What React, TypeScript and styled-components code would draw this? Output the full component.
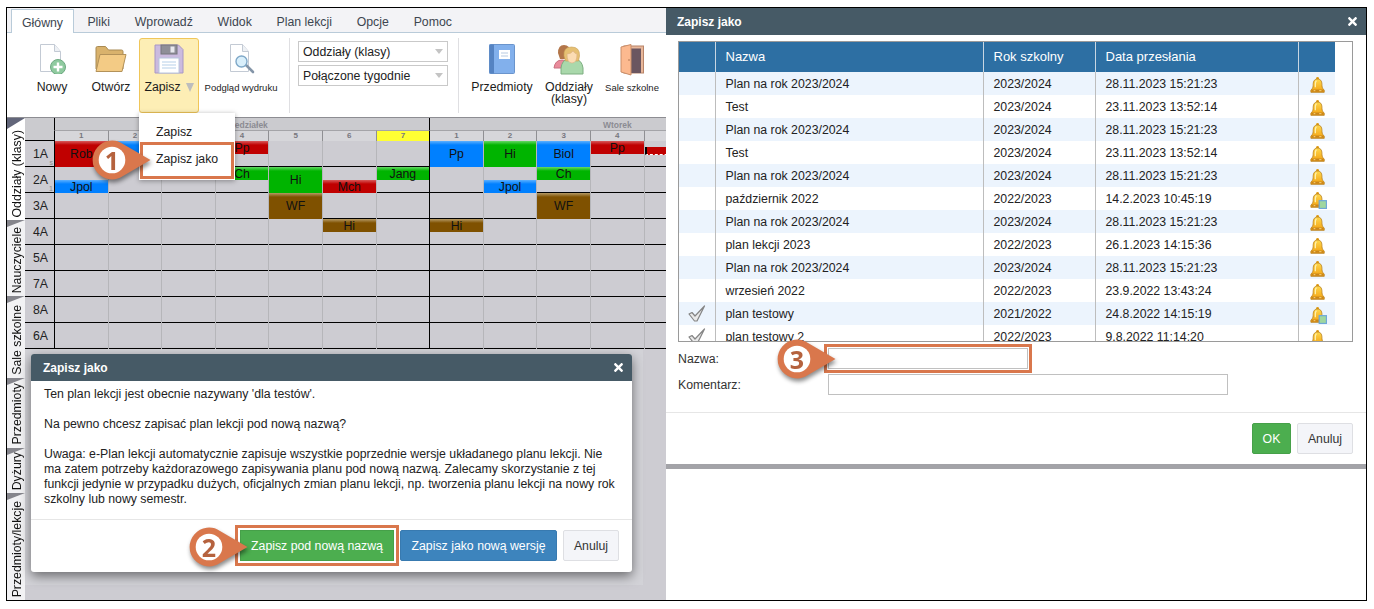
import React from "react";
import styled, { createGlobalStyle } from "styled-components";
import { FaTimes } from "react-icons/fa";

const GlobalStyle = createGlobalStyle`
  html, body { margin: 0; padding: 0; background: #fff; }
  body { font-family: "Liberation Sans", Arial, sans-serif; font-size: 12.3px; color: #222; }
  * { box-sizing: border-box; }
`;

const ORANGE = "#d9774c";

const Page = styled.div`
  position: relative;
  width: 1374px;
  height: 609px;
  padding: 7px 7px 8px 6px;
  overflow: hidden;
`;

const Frame = styled.div`
  display: flex;
  height: 100%;
  border: 1px solid #000;
`;

const LeftPane = styled.div`
  position: relative;
  width: 659px;
  display: flex;
  flex-direction: column;
  overflow: hidden;
  background: #cdccd2;
`;

const TabBar = styled.div`
  display: flex;
  height: 25px;
  padding: 1px 0 0 4px;
  background: #f3f3f6;
  border-bottom: 1px solid #b9cbd9;
`;

const Tab = styled.div<{ $active?: boolean }>`
  padding: 0 ${(p) => (p.$active ? "10px" : "12.4px")};
  height: 24px;
  line-height: 26px;
  color: #3d4650;
  ${(p) =>
    p.$active &&
    `background: #fff; border: 1px solid #b9cbd9; border-bottom: 0; margin-right: 1px;`}
`;

const Ribbon = styled.div`
  display: flex;
  height: 85px;
  padding: 5px 0 4px 16px;
  background: #fff;
  border-bottom: 1px solid #8d8d92;
`;

const RibbonButton = styled.div<{ $w: number; $on?: boolean; $left?: number }>`
  width: ${(p) => p.$w}px;
  flex: none;
  display: flex;
  flex-direction: column;
  align-items: center;
  margin-left: ${(p) => p.$left ?? 0}px;
  padding-top: 6px;
  border-radius: 3px;
  color: #1c1c1c;
  ${(p) => p.$on && `background: #fdeeb5; border: 1px solid #f0c659; padding-top: 5px;`}
  svg { flex: none; margin-bottom: 7px; }
`;

const RibbonLabel = styled.div<{ $small?: boolean; $lift?: number }>`
  display: flex;
  align-items: center;
  gap: 5px;
  text-align: center;
  line-height: 12px;
  white-space: nowrap;
  margin-top: ${(p) => p.$lift ?? 0}px;
  ${(p) => p.$small && `font-size: 9.5px;`}
`;

const LabelCaret = styled.span`
  width: 0;
  height: 0;
  border-left: 4.5px solid transparent;
  border-right: 4.5px solid transparent;
  border-top: 9px solid #bdbdbd;
`;

const RibbonDivider = styled.div<{ $left: number }>`
  width: 1px;
  flex: none;
  margin-left: ${(p) => p.$left}px;
  background: #dfdfe2;
`;

const SelectStack = styled.div`
  width: 150px;
  flex: none;
  display: flex;
  flex-direction: column;
  gap: 3px;
  margin: 3px 10px 0 8px;
`;

const FakeSelect = styled.div`
  display: flex;
  align-items: center;
  justify-content: space-between;
  height: 21px;
  padding: 0 4px;
  border: 1px solid #c9c9c9;
  color: #222;
  &::after {
    content: "";
    border-left: 4px solid transparent;
    border-right: 4px solid transparent;
    border-top: 5px solid #c4c4c4;
  }
`;

const Menu = styled.div`
  position: absolute;
  left: 132px;
  top: 105px;
  width: 96px;
  padding: 1px;
  background: #fff;
  box-shadow: 0 1px 5px rgba(0, 0, 0, 0.35);
  z-index: 3;
`;

const MenuItem = styled.div<{ $marked?: boolean }>`
  line-height: 16px;
  color: #222;
  padding: ${(p) => (p.$marked ? "6px 0 9px 13px" : "10px 0 2px 16px")};
  ${(p) => p.$marked && `border: 3px solid ${ORANGE};`}
`;

const WorkArea = styled.div`
  flex: 1;
  display: flex;
  min-height: 0;
`;

const SideTabs = styled.div`
  width: 18px;
  flex: none;
  display: flex;
  flex-direction: column;
  background: #f4f4f6;
`;

const SideTab = styled.div<{ $h: number; $active?: boolean }>`
  position: relative;
  height: ${(p) => p.$h}px;
  display: flex;
  justify-content: center;
  align-items: flex-end;
  padding: 0 0 3px 1px;
  background: ${(p) => (p.$active ? "#fff" : "#f2f2f4")};
  &::before {
    content: "";
    position: absolute;
    left: 0;
    top: 0;
    width: 100%;
    height: ${(p) => (p.$active ? 11 : 7)}px;
    background: ${(p) => (p.$active ? "#62667a" : "#85858c")};
    clip-path: polygon(0 0, 100% 0, 0 100%);
  }
`;

const SideTabText = styled.span`
  writing-mode: vertical-rl;
  transform: rotate(180deg);
  color: #111;
  line-height: 16px;
  white-space: nowrap;
`;

const Schedule = styled.div`
  position: relative;
  flex: 1;
  min-width: 0;
`;

const DayRow = styled.div`
  display: flex;
  height: 12px;
  padding-left: 29px;
  background: #cbcbcf;
`;

const DayName = styled.div`
  width: 375.2px;
  flex: none;
  text-align: center;
  font-size: 8.5px;
  font-weight: bold;
  line-height: 15px;
  color: #8b8b93;
  border-left: 1px solid #000;
`;

const PeriodRow = styled.div`
  display: grid;
  grid-template-columns: 29px repeat(12, 53.6px);
  height: 11px;
  background: #cbcbcf;
  border-bottom: 1px solid #000;
`;

const Period = styled.div<{ $dayStart?: boolean; $hot?: boolean }>`
  text-align: center;
  font-size: 8px;
  font-weight: bold;
  line-height: 10px;
  color: #77777e;
  background: ${(p) => (p.$hot ? "#ffff33" : "#d6d6da")};
  border-top: 1px solid #a4a4a8;
  border-left: 1px solid ${(p) => (p.$dayStart ? "#000" : "#8f8f93")};
`;

const ClassRow = styled.div`
  display: grid;
  grid-template-columns: 29px repeat(12, 53.6px);
  height: 26px;
  border-bottom: 1px solid #000;
`;

const ClassName = styled.div`
  position: relative;
  padding-left: 8px;
  line-height: 26px;
  color: #222;
`;

const ClassHint = styled.span`
  position: absolute;
  right: 1px;
  bottom: 0;
  font-size: 7px;
  line-height: 8px;
  color: #8a8a8a;
`;

const Cell = styled.div<{ $dayStart?: boolean }>`
  display: flex;
  flex-direction: column;
  min-width: 0;
  border-left: 1px solid ${(p) => (p.$dayStart ? "#000" : "#b6b6ba")};
`;

const lessonColors = {
  blue: ["#0080ff", "#5cb0ff"],
  green: ["#00b400", "#66d866"],
  red: ["#c00000", "#d85a5a"],
  brown: ["#7f5100", "#b59a66"],
};

type LessonColor = keyof typeof lessonColors;

const Lesson = styled.div<{ $color: LessonColor; $half?: boolean; $low?: boolean }>`
  height: ${(p) => (p.$half ? "13px" : "100%")};
  margin-top: ${(p) => (p.$low ? "auto" : "0")};
  display: flex;
  align-items: center;
  justify-content: center;
  color: #111;
  background: linear-gradient(
    to bottom,
    ${(p) => lessonColors[p.$color][1]} 0,
    ${(p) => lessonColors[p.$color][0]} 4px
  );
`;

const TinyLesson = styled.div`
  height: 8px;
  margin-top: 6px;
  background: #c00000;
  border-left: 2px solid #000;
  border-bottom: 1px dashed #fff;
`;

const DimBackdrop = styled.div`
  position: absolute;
  left: 18px;
  top: 341px;
  width: 618px;
  height: 236px;
  background: #d3d3d8;
`;

const Dialog = styled.div`
  position: absolute;
  left: 24px;
  top: 346px;
  width: 601px;
  background: #fff;
  border-radius: 3px;
  box-shadow: 0 4px 12px rgba(0, 0, 0, 0.5);
  z-index: 2;
`;

const DialogHead = styled.div<{ $square?: boolean }>`
  display: flex;
  align-items: center;
  justify-content: space-between;
  height: 27px;
  padding: ${(p) => (p.$square ? "0 7px 0 11px" : "0 7px 0 12px")};
  color: #fff;
  font-weight: bold;
  font-size: 12px;
  background: #465a66;
  border-radius: ${(p) => (p.$square ? "0" : "3px 3px 0 0")};
`;

const DialogBody = styled.div`
  padding: 6px 13px 12px;
  line-height: 15px;
  color: #222;
  p { margin: 0 0 15px; }
  p:last-child { margin: 0; }
`;

const DialogFoot = styled.div`
  display: flex;
  justify-content: flex-end;
  gap: 6px;
  padding: 10px 13px 11px;
  border-top: 1px solid #e6e6e6;
`;

const buttonTones = {
  green: "background: #4cae4f; border-color: #46a049; color: #fff;",
  blue: "background: #3d84bd; border-color: #387ab0; color: #fff;",
  plain: "background: #f4f5f9; border-color: #dedfe3; color: #333;",
};

const Button = styled.button<{ $tone: keyof typeof buttonTones; $marked?: boolean; $w: number }>`
  width: ${(p) => p.$w}px;
  height: 31px;
  padding: 0;
  font: inherit;
  border: 1px solid;
  border-radius: ${(p) => (p.$marked ? "0" : "2px")};
  ${(p) => buttonTones[p.$tone]}
  ${(p) => p.$marked && `outline: 3px solid ${ORANGE}; outline-offset: 2px;`}
`;

const RightPane = styled.div`
  flex: 1;
  min-width: 0;
  background: #fff;
`;

const SaveWindow = styled.div`
  background: #fff;
  box-shadow: 0 5px 0 #a3a3a8;
`;

const ListBox = styled.div`
  height: 301px;
  margin: 6px 13px 0 12px;
  border: 1px solid #9a9a9a;
  overflow: hidden;
`;

const Table = styled.table`
  width: 656px;
  table-layout: fixed;
  border-collapse: collapse;
  color: #222;
`;

const HeadCell = styled.th`
  height: 30px;
  padding: 0 0 2px 10px;
  font-weight: normal;
  font-size: 13px;
  text-align: left;
  color: #fff;
  background: #2d6fa3;
  border-left: 1px solid #c8d6e2;
  &:first-child { border-left: 0; }
`;

const BodyRow = styled.tr`
  height: 23px;
  background: #fff;
  &:nth-child(odd) { background: #ecf4fd; }
`;

const BodyCell = styled.td<{ $icon?: boolean }>`
  padding: ${(p) => (p.$icon ? "0" : "0 0 0 10px")};
  text-align: ${(p) => (p.$icon ? "center" : "left")};
  border-left: 1px solid #bdbdbd;
  line-height: 14px;
  white-space: nowrap;
  &:first-child { border-left: 0; }
  svg { display: block; margin: 0 auto; }
`;

const Form = styled.div`
  display: grid;
  grid-template-columns: 150px 400px;
  row-gap: 5px;
  align-items: center;
  margin: 6px 0 17px 12px;
`;

const FieldLabel = styled.label`
  color: #333;
`;

const TextField = styled.input<{ $short?: boolean; $marked?: boolean }>`
  display: block;
  width: ${(p) => (p.$short ? "200px" : "400px")};
  height: 21px;
  border: 1px solid #c0c0c0;
  border-radius: 0;
  background: #fff;
  ${(p) => p.$marked && `outline: 3px solid ${ORANGE}; outline-offset: 1px;`}
`;

const WindowFoot = styled(DialogFoot)`
  padding: 10px 13px 10px;
`;

const CalloutWrap = styled.div<{ $x: number; $y: number }>`
  position: absolute;
  left: ${(p) => p.$x}px;
  top: ${(p) => p.$y}px;
  width: 62px;
  height: 40px;
  z-index: 5;
  filter: drop-shadow(1px 3px 2px rgba(0, 0, 0, 0.45));
`;

const CalloutDigit = styled.span`
  position: absolute;
  left: 0;
  top: 0;
  width: 40px;
  height: 40px;
  text-align: center;
  font-family: "Open Sans", "Liberation Sans", sans-serif;
  font-weight: bold;
  font-size: 25px;
  line-height: 40px;
  color: #b5623e;
`;

const HiddenDefs = styled.svg`
  position: absolute;
  width: 0;
  height: 0;
`;

function Callout({ x, y, n }: { x: number; y: number; n: number }) {
  return (
    <CalloutWrap $x={x} $y={y}>
      <svg width="62" height="40" viewBox="0 0 62 40">
        <path d="M31 4 L58.500 20 L31 36 A19.400 19.400 0 1 1 31 4 Z" fill={ORANGE} />
        <circle cx="20" cy="20" r="13.300" fill="#fff" />
      </svg>
      <CalloutDigit>{n}</CalloutDigit>
    </CalloutWrap>
  );
}

function NewIcon() {
  return (
    <svg width="30" height="30" viewBox="0 0 30 30">
      <path d="M3.500.5h14l6 7v20h-20z" fill="#fff" stroke="#c3cad4" />
      <path d="M17.500.5v7h6" fill="#eef1f5" stroke="#c3cad4" />
      <circle cx="21" cy="23" r="7.500" fill="#8fca9f" stroke="#6da981" />
      <path d="M21 18.500v9M16.500 23h9" stroke="#fff" strokeWidth="2.400" />
    </svg>
  );
}

function FolderIcon() {
  return (
    <svg width="32" height="30" viewBox="0 0 32 30">
      <path d="M1 25V4q0-1.500 1.500-1.500h8l3 3.500h13q1.500 0 1.500 1.500V25z" fill="#d9b26c" stroke="#a98a52" />
      <path d="M5 10.500h26L27 27.500H1z" fill="#f3cb85" stroke="#b3925a" />
    </svg>
  );
}

function SaveIcon() {
  return (
    <svg width="30" height="30" viewBox="0 0 30 30">
      <path d="M1 1h23.500L29 5.500V29H1z" fill="#cbbbdf" stroke="#a897c4" />
      <rect x="7" y="1" width="16" height="9" fill="#8f8f98" stroke="#76767e" />
      <rect x="16.500" y="2.500" width="4" height="6" fill="#e8e8ee" />
      <rect x="5" y="14" width="20" height="15" fill="#fff" stroke="#b8c6de" />
      <path d="M8 18h14M8 21h14M8 24h14" stroke="#b5cfe8" />
    </svg>
  );
}

function PreviewIcon() {
  return (
    <svg width="30" height="30" viewBox="0 0 30 30">
      <path d="M4.500.5h12l6 7v20h-18z" fill="#fff" stroke="#c3cad4" />
      <path d="M16.500.5v7h6" fill="#eef1f5" stroke="#c3cad4" />
      <path d="M20 21l7 7" stroke="#8495a8" strokeWidth="2.600" strokeLinecap="round" />
      <circle cx="15.500" cy="17.500" r="5.500" fill="#d9effb" stroke="#7fa8c8" strokeWidth="1.400" />
    </svg>
  );
}

function BookIcon() {
  return (
    <svg width="26" height="30" viewBox="0 0 26 30">
      <rect x="0.500" y="0.500" width="25" height="29" rx="1" fill="#82b0ec" stroke="#6a94cc" />
      <rect x="0.500" y="0.500" width="4.500" height="29" fill="#5583c2" />
      <rect x="10" y="6" width="11" height="9" fill="#fff" />
      <path d="M12 9h7M12 12h7" stroke="#b8cbe2" />
    </svg>
  );
}

function PeopleIcon() {
  return (
    <svg width="32" height="32" viewBox="0 0 32 32">
      <path d="M1 24q1-8 8-8t8 8z" fill="#e98b9b" stroke="#c97080" />
      <path d="M5 9q0-8 6-8t6 7l-2 7H7z" fill="#b3764a" />
      <path d="M8 24q1-8 7-9h7q7 1 8 9v6H8z" fill="#a9d8ab" stroke="#7cae80" />
      <path d="M11 12q-1-9 7.500-9t8 9l-1 5h-13z" fill="#e6c073" stroke="#c7a055" strokeWidth=".6" />
      <path d="M14 10q4 0 6-3 2 3 4 3 0 9-5 9t-5-9z" fill="#fbdcb3" stroke="#dbb083" strokeWidth=".6" />
    </svg>
  );
}

function DoorIcon() {
  return (
    <svg width="24" height="32" viewBox="0 0 24 32">
      <rect x="4" y="2" width="19.500" height="27" fill="#e8b79a" stroke="#b88468" />
      <rect x="10" y="4.500" width="11" height="24.500" fill="#6b5660" />
      <path d="M1 3l10-2.500V31L1 28z" fill="#fcb98f" stroke="#c98d68" />
      <circle cx="9" cy="16" r=".8" fill="#a9704e" />
    </svg>
  );
}

function BellIcon({ badge }: { badge?: boolean }) {
  return (
    <svg width="20" height="20" viewBox="0 -3 18 18">
      <circle cx="9.500" cy="1" r="1.300" fill="#e09a12" />
      <path
        d="M9.500 1.500C6 1.500 5.500 4.500 5.500 7.500c0 2-1 3-2 4v2h12v-2c-1-1-2-2-2-4 0-3-.5-6-4-6z"
        fill="url(#bell-fill)"
        stroke="#b47c18"
        strokeWidth=".7"
      />
      <path d="M7.500 9V6q0-2 1-3" stroke="#fff2b0" strokeWidth="1.100" fill="none" />
      <rect x="4" y="11" width="11" height="2" fill="#c9861a" />
      <path d="M6 12h1.500M11 12h2" stroke="#ffe08a" strokeWidth=".8" />
      {badge && <rect x="11" y="7.500" width="6.500" height="7" fill="#9fd79f" stroke="#6fa8d8" strokeWidth="1.100" />}
    </svg>
  );
}

function CheckIcon() {
  return (
    <svg width="20" height="17" viewBox="0 0 20 17">
      <path d="M2 9l3-1.500L8 11 17.500 1 10 16H7.500z" fill="#e9e9e9" stroke="#858585" strokeWidth="1.200" strokeLinejoin="round" />
    </svg>
  );
}

type LessonInfo = { at: number; name?: string; color?: LessonColor; half?: boolean; low?: boolean; tiny?: boolean };

const classes: { name: string; hint?: string; lessons: LessonInfo[] }[] = [
  {
    name: "1A",
    hint: "s",
    lessons: [
      { at: 0, name: "Rob", color: "red" },
      { at: 1, color: "blue" },
      { at: 3, name: "Pp", color: "red", half: true },
      { at: 7, name: "Pp", color: "blue" },
      { at: 8, name: "Hi", color: "green" },
      { at: 9, name: "Biol", color: "blue" },
      { at: 10, name: "Pp", color: "red", half: true },
      { at: 11, tiny: true },
    ],
  },
  {
    name: "2A",
    hint: "1",
    lessons: [
      { at: 0, name: "Jpol", color: "blue", half: true, low: true },
      { at: 3, name: "Ch", color: "green", half: true },
      { at: 4, name: "Hi", color: "green" },
      { at: 5, name: "Mch", color: "red", half: true, low: true },
      { at: 6, name: "Jang", color: "green", half: true },
      { at: 8, name: "Jpol", color: "blue", half: true, low: true },
      { at: 9, name: "Ch", color: "green", half: true },
    ],
  },
  {
    name: "3A",
    lessons: [
      { at: 4, name: "WF", color: "brown" },
      { at: 9, name: "WF", color: "brown" },
    ],
  },
  {
    name: "4A",
    lessons: [
      { at: 5, name: "Hi", color: "brown", half: true },
      { at: 7, name: "Hi", color: "brown", half: true },
    ],
  },
  { name: "5A", lessons: [] },
  { name: "7A", lessons: [] },
  { name: "8A", lessons: [] },
  { name: "6A", lessons: [] },
];

// the last column runs off the pane, its number is not visible
const periods = ["1", "2", "3", "4", "5", "6", "7", "1", "2", "3", "4", ""];

const sideTabs = [
  { label: "Oddziały (klasy)", h: 102, active: true },
  { label: "Nauczyciele", h: 76 },
  { label: "Sale szkolne", h: 82 },
  { label: "Przedmioty", h: 70 },
  { label: "Dyżury", h: 45 },
  { label: "Przedmioty/lekcje", h: 107 },
];

const versions = [
  ["Plan na rok 2023/2024", "2023/2024", "28.11.2023 15:21:23"],
  ["Test", "2023/2024", "23.11.2023 13:52:14"],
  ["Plan na rok 2023/2024", "2023/2024", "28.11.2023 15:21:23"],
  ["Test", "2023/2024", "23.11.2023 13:52:14"],
  ["Plan na rok 2023/2024", "2023/2024", "28.11.2023 15:21:23"],
  ["październik 2022", "2022/2023", "14.2.2023 10:45:19", "badge"],
  ["Plan na rok 2023/2024", "2023/2024", "28.11.2023 15:21:23"],
  ["plan lekcji 2023", "2022/2023", "26.1.2023 14:15:36"],
  ["Plan na rok 2023/2024", "2023/2024", "28.11.2023 15:21:23"],
  ["wrzesień 2022", "2022/2023", "23.9.2022 13:43:24"],
  ["plan testowy", "2021/2022", "24.8.2022 14:15:19", "badge", "check"],
  ["plan testowy 2", "2022/2023", "9.8.2022 11:14:20", "", "check"],
];

export default function App() {
  return (
    <Page>
      <GlobalStyle />
      <HiddenDefs>
        <defs>
          <linearGradient id="bell-fill" x1="0" y1="0" x2="0" y2="1">
            <stop offset="0" stopColor="#ffd94d" />
            <stop offset="1" stopColor="#f2a011" />
          </linearGradient>
        </defs>
      </HiddenDefs>
      <Frame>
        <LeftPane>
          <TabBar>
            <Tab $active>Główny</Tab>
            {["Pliki", "Wprowadź", "Widok", "Plan lekcji", "Opcje", "Pomoc"].map((t) => (
              <Tab key={t}>{t}</Tab>
            ))}
          </TabBar>
          <Ribbon>
            <RibbonButton $w={58}>
              <NewIcon />
              <RibbonLabel>Nowy</RibbonLabel>
            </RibbonButton>
            <RibbonButton $w={60}>
              <FolderIcon />
              <RibbonLabel>Otwórz</RibbonLabel>
            </RibbonButton>
            <RibbonButton $w={60} $left={-2} $on>
              <SaveIcon />
              <RibbonLabel>
                Zapisz
                <LabelCaret />
              </RibbonLabel>
            </RibbonButton>
            <RibbonButton $w={84}>
              <PreviewIcon />
              <RibbonLabel $small $lift={1}>Podgląd wydruku</RibbonLabel>
            </RibbonButton>
            <RibbonDivider $left={6} />
            <SelectStack>
              <FakeSelect>Oddziały (klasy)</FakeSelect>
              <FakeSelect>Połączone tygodnie</FakeSelect>
            </SelectStack>
            <RibbonDivider $left={0} />
            <RibbonButton $w={86}>
              <BookIcon />
              <RibbonLabel>Przedmioty</RibbonLabel>
            </RibbonButton>
            <RibbonButton $w={48}>
              <PeopleIcon />
              <RibbonLabel $lift={-2}>
                Oddziały
                <br />
                (klasy)
              </RibbonLabel>
            </RibbonButton>
            <RibbonButton $w={66} $left={6}>
              <DoorIcon />
              <RibbonLabel $small $lift={-1}>Sale szkolne</RibbonLabel>
            </RibbonButton>
          </Ribbon>
          <Menu>
            <MenuItem>Zapisz</MenuItem>
            <MenuItem $marked>Zapisz jako</MenuItem>
          </Menu>
          <WorkArea>
            <SideTabs>
              {sideTabs.map((t) => (
                <SideTab key={t.label} $h={t.h} $active={t.active}>
                  <SideTabText>{t.label}</SideTabText>
                </SideTab>
              ))}
            </SideTabs>
            <Schedule>
              <DayRow>
                <DayName>Poniedziałek</DayName>
                <DayName>Wtorek</DayName>
              </DayRow>
              <PeriodRow>
                <span />
                {periods.map((p, i) => (
                  <Period key={i} $dayStart={i === 0 || i === 7} $hot={i === 6}>
                    {p}
                  </Period>
                ))}
              </PeriodRow>
              {classes.map((c) => (
                <ClassRow key={c.name}>
                  <ClassName>
                    {c.name}
                    {c.hint && <ClassHint>{c.hint}</ClassHint>}
                  </ClassName>
                  {periods.map((_, i) => {
                    const lesson = c.lessons.find((l) => l.at === i);
                    return (
                      <Cell key={i} $dayStart={i === 0 || i === 7}>
                        {lesson?.tiny && <TinyLesson />}
                        {lesson?.color && (
                          <Lesson $color={lesson.color} $half={lesson.half} $low={lesson.low}>
                            {lesson.name}
                          </Lesson>
                        )}
                      </Cell>
                    );
                  })}
                </ClassRow>
              ))}
            </Schedule>
          </WorkArea>
          <DimBackdrop />
          <Dialog>
            <DialogHead>
              Zapisz jako
              <FaTimes size={13} />
            </DialogHead>
            <DialogBody>
              <p>Ten plan lekcji jest obecnie nazywany 'dla testów'.</p>
              <p>Na pewno chcesz zapisać plan lekcji pod nową nazwą?</p>
              <p>
                Uwaga: e-Plan lekcji automatycznie zapisuje wszystkie poprzednie wersje układanego planu lekcji. Nie
                ma zatem potrzeby każdorazowego zapisywania planu pod nową nazwą. Zalecamy skorzystanie z tej
                funkcji jedynie w przypadku dużych, oficjalnych zmian planu lekcji, np. tworzenia planu lekcji na nowy
                rok szkolny lub nowy semestr.
              </p>
            </DialogBody>
            <DialogFoot>
              <Button $tone="green" $marked $w={154}>Zapisz pod nową nazwą</Button>
              <Button $tone="blue" $w={157}>Zapisz jako nową wersję</Button>
              <Button $tone="plain" $w={56}>Anuluj</Button>
            </DialogFoot>
          </Dialog>
        </LeftPane>
        <RightPane>
          <SaveWindow>
            <DialogHead $square>
              Zapisz jako
              <FaTimes size={13} />
            </DialogHead>
            <ListBox>
              <Table>
                <colgroup>
                  <col width={36} />
                  <col width={268} />
                  <col width={112} />
                  <col width={203} />
                  <col width={37} />
                </colgroup>
                <thead>
                  <tr>
                    <HeadCell />
                    <HeadCell>Nazwa</HeadCell>
                    <HeadCell>Rok szkolny</HeadCell>
                    <HeadCell>Data przesłania</HeadCell>
                    <HeadCell />
                  </tr>
                </thead>
                <tbody>
                  {versions.map((v, i) => (
                    <BodyRow key={i}>
                      <BodyCell $icon>{v[4] && <CheckIcon />}</BodyCell>
                      <BodyCell>{v[0]}</BodyCell>
                      <BodyCell>{v[1]}</BodyCell>
                      <BodyCell>{v[2]}</BodyCell>
                      <BodyCell $icon>
                        <BellIcon badge={v[3] === "badge"} />
                      </BodyCell>
                    </BodyRow>
                  ))}
                </tbody>
              </Table>
            </ListBox>
            <Form>
              <FieldLabel>Nazwa:</FieldLabel>
              <TextField $short $marked />
              <FieldLabel>Komentarz:</FieldLabel>
              <TextField />
            </Form>
            <WindowFoot>
              <Button $tone="green" $w={39}>OK</Button>
              <Button $tone="plain" $w={56}>Anuluj</Button>
            </WindowFoot>
          </SaveWindow>
        </RightPane>
      </Frame>
      <Callout x={92} y={140} n={1} />
      <Callout x={189} y={527} n={2} />
      <Callout x={777} y={339} n={3} />
    </Page>
  );
}
